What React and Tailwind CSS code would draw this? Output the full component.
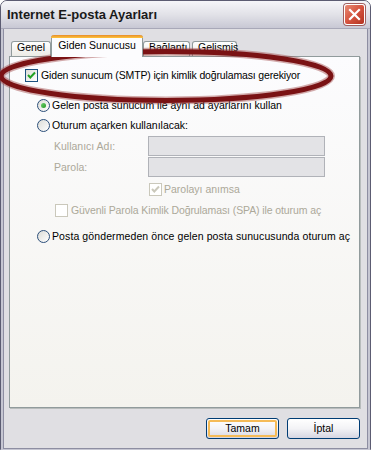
import React from "react";

function CheckBox({ checked, disabled }) {
  return (
    <div
      className={
        "w-[13px] h-[13px] shrink-0 border flex items-center justify-center " +
        (disabled
          ? "border-[#cac8bb] bg-white"
          : "border-[#1c5180] bg-gradient-to-br from-[#dcdcd7] to-white")
      }
    >
      {checked && (
        <svg width="11" height="11" viewBox="0 0 11 11">
          <path
            d="M2 5 L4.3 7.5 L9 2.5"
            fill="none"
            stroke={disabled ? "#cac8bb" : "#21a121"}
            strokeWidth="2"
          />
        </svg>
      )}
    </div>
  );
}

function Radio({ checked }) {
  return (
    <div className="w-[13px] h-[13px] shrink-0 rounded-full border border-[#2c4f7a] bg-gradient-to-br from-[#dcdcd7] to-white flex items-center justify-center">
      {checked && (
        <div className="w-[5px] h-[5px] rounded-full bg-gradient-to-br from-[#6fd06f] to-[#1e9a1e]" />
      )}
    </div>
  );
}

function Tab({ children, selected, w }) {
  if (selected) {
    return (
      <div
        className={
          "relative z-10 h-[22px] -mb-[1px] border-x border-[#919b9c] rounded-t-[3px] bg-[#fcfcfe] flex flex-col " +
          w
        }
      >
        <div className="h-[3px] -mx-[1px] rounded-t-[3px] bg-gradient-to-b from-[#e68b2c] to-[#ffc73c]" />
        <div className="flex-1 flex items-start justify-center pt-[1px] text-black">
          {children}
        </div>
      </div>
    );
  }
  return (
    <div
      className={
        "h-[15px] border-x border-t border-[#919b9c] rounded-t-[3px] bg-gradient-to-b from-white to-[#ecebe6] flex items-start pl-[5px] leading-[11px] text-black " +
        w
      }
    >
      {children}
    </div>
  );
}

function Button({ children, focused }) {
  return (
    <div className="w-[73px] h-[21px] rounded-[3px] border border-[#003c74] bg-gradient-to-b from-white via-[#f3f3f6] to-[#d6d6e2] p-[1px]">
      <div
        className={
          "w-full h-full rounded-[2px] flex items-center justify-center text-black " +
          (focused ? "border-2 border-[#f5bb57]" : "")
        }
      >
        {children}
      </div>
    </div>
  );
}

export default function App() {
  return (
    <div className="relative w-[371px] h-[450px] overflow-hidden font-['Liberation_Sans',Arial,sans-serif] text-[10.5px] leading-[13px] bg-white">
      <div className="w-full h-full flex flex-col rounded-t-[7px] border border-[#5c5c72] bg-[#e0dfe3]">
        {/* Title bar */}
        <div className="h-[28px] shrink-0 rounded-t-[6px] bg-gradient-to-b from-[#f6f6f9] via-[#e2e2e8] to-[#c8c8d4] flex items-center justify-between pl-[6px] pr-[5px] border-b border-[#a8a8b8]">
          <span className="font-bold text-[13px] leading-[16px] text-[#1a1a1a]">
            Internet E-posta Ayarları
          </span>
          <div className="w-[21px] h-[21px] rounded-[3px] border border-white bg-gradient-to-br from-[#e88a74] via-[#d5533f] to-[#b3321f] shadow-[0_0_0_1px_#a06060] flex items-center justify-center">
            <svg width="13" height="13" viewBox="0 0 13 13">
              <path
                d="M2 2 L11 11 M11 2 L2 11"
                stroke="white"
                strokeWidth="2.2"
                strokeLinecap="square"
              />
            </svg>
          </div>
        </div>

        {/* Body */}
        <div className="flex-1 flex flex-col border-x-[2px] border-b-[2px] border-[#c6c6d2] shadow-[inset_1px_0_0_#8e8ea2,inset_-1px_0_0_#8e8ea2,inset_0_-1px_0_#8e8ea2] pl-[6px] pr-[8px] pb-[10px]">
          {/* Tabs */}
          <div className="mt-[5px] h-[22px] flex items-end pl-[2px]">
            <Tab w="w-[40px]">Genel</Tab>
            <Tab selected w="w-[92px]">
              Giden Sunucusu
            </Tab>
            <Tab w="w-[47px]">Bağlantı</Tab>
            <div className="w-[2px]" />
            <Tab w="w-[45px]">Gelişmiş</Tab>
          </div>

          {/* Panel */}
          <div className="h-[352px] border border-[#919b9c] shadow-[1px_1px_0_#b8bcbc] bg-gradient-to-b from-[#fcfcfe] to-[#f4f3ee] flex flex-col pl-[15px]">
            <div className="mt-[12px] flex items-center gap-[3px] text-black">
              <CheckBox checked />
              <span className="tracking-[-0.15px]">
                Giden sunucum (SMTP) için kimlik doğrulaması gerekiyor
              </span>
            </div>

            <div className="pl-[12px] flex flex-col">
              <div className="mt-[17px] flex items-center gap-[2px] text-black">
                <Radio checked />
                <span>Gelen posta sunucum ile aynı ad ayarlarını kullan</span>
              </div>
              <div className="mt-[7px] flex items-center gap-[2px] text-black">
                <Radio />
                <span>Oturum açarken kullanılacak:</span>
              </div>

              <div className="pl-[17px] flex flex-col">
                <div className="mt-[4px] flex items-center">
                  <span className="w-[94px] text-[#aca899]">Kullanıcı Adı:</span>
                  <div className="w-[177px] h-[20px] bg-[#e3e3e6] border border-[#b0b2b8]" />
                </div>
                <div className="mt-[1px] flex items-center">
                  <span className="w-[94px] text-[#aca899]">Parola:</span>
                  <div className="w-[177px] h-[20px] bg-[#e3e3e6] border border-[#b0b2b8]" />
                </div>
                <div className="mt-[6px] pl-[95px] flex items-center gap-[2px] text-[#aca899]">
                  <CheckBox checked disabled />
                  <span>Parolayı anımsa</span>
                </div>
                <div className="mt-[8px] pl-[1px] flex items-center gap-[3px] text-[#aca899]">
                  <CheckBox disabled />
                  <span className="tracking-[-0.1px]">
                    Güvenli Parola Kimlik Doğrulaması (SPA) ile oturum aç
                  </span>
                </div>
              </div>

              <div className="mt-[13px] flex items-center gap-[2px] text-black">
                <Radio />
                <span className="tracking-[0.1px]">
                  Posta göndermeden önce gelen posta sunucusunda oturum aç
                </span>
              </div>
            </div>
          </div>

          {/* Buttons */}
          <div className="mt-[10px] flex justify-end gap-[8px]">
            <Button focused>Tamam</Button>
            <Button>İptal</Button>
          </div>
        </div>
      </div>

      {/* Red highlight ellipse */}
      <svg
        className="absolute left-0 top-0 pointer-events-none"
        width="371"
        height="450"
        viewBox="0 0 371 450"
      >
        <ellipse
          cx="166"
          cy="76"
          rx="165"
          ry="24.5"
          fill="none"
          stroke="#a04848"
          strokeOpacity="0.45"
          strokeWidth="8"
        />
        <ellipse
          cx="166"
          cy="76"
          rx="165"
          ry="24.5"
          fill="none"
          stroke="#7a1214"
          strokeWidth="5"
        />
      </svg>
    </div>
  );
}
